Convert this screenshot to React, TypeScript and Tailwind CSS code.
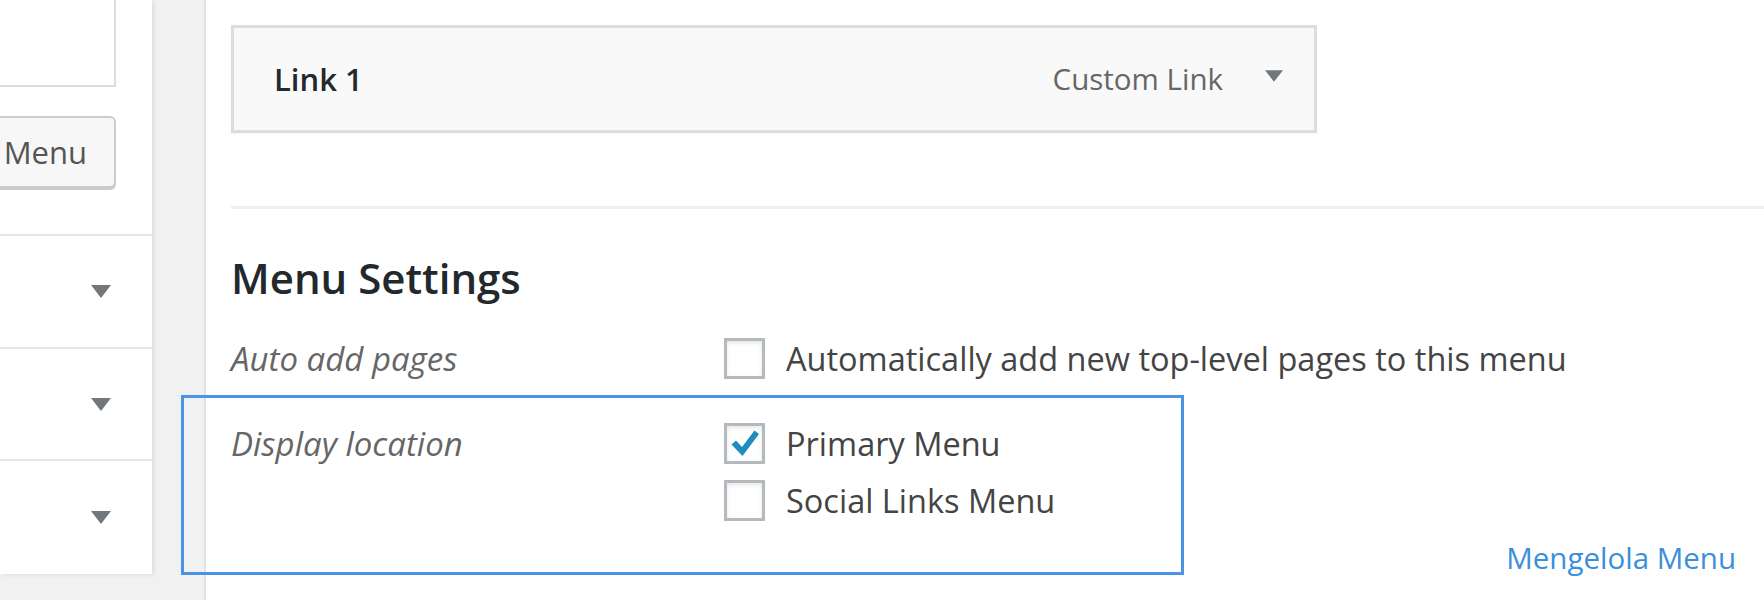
import React from 'react';

const font = { fontFamily: '"Open Sans", "Noto Sans", sans-serif' };

const Arrow = ({ className = '' }: { className?: string }) => (
  <svg viewBox="0 0 20 13" className={className} aria-hidden="true">
    <polygon points="0,0 20,0 10,13" fill="#72777c" />
  </svg>
);

const Checkbox = ({ checked = false }: { checked?: boolean }) => (
  <span className="flex h-[41px] w-[41px] shrink-0 items-center justify-center border-[3px] border-[#b4b9be] bg-white shadow-[inset_0_2px_4px_rgba(0,0,0,0.1)]">
    {checked && (
      <svg viewBox="0 0 35 35" className="h-[35px] w-[35px]" aria-hidden="true">
        <path d="M4.5 18.5 L9 14.5 L15 21 L27.5 4.5 L32 8 L15.5 30 Z" fill="#1e8cbe" />
      </svg>
    )}
  </span>
);

const SidePanel = () => (
  <div className="flex h-[574px] w-[152px] shrink-0 flex-col bg-white shadow-[2px_1px_4px_rgba(0,0,0,0.08)]">
    <div className="h-[87px] w-[116px] border-b-2 border-r-2 border-[#dddddd]" />
    <div className="mt-[29px] flex h-[73px] w-[116px] items-center justify-end rounded-r-[6px] border-2 border-l-0 border-[#cccccc] bg-[#f7f7f7] pr-[27px] text-[31px] text-[#555555] shadow-[0_2px_0_#cccccc]">
      Menu
    </div>
    <div className="mt-[46px] border-t-2 border-[#e5e5e5]" />
    {[0, 1, 2].map((i) => (
      <div key={i} className="flex h-[113px] items-center justify-end border-b-2 border-[#e5e5e5] pr-[41px] last:border-b-0">
        <Arrow className="h-[13px] w-[20px]" />
      </div>
    ))}
  </div>
);

export default function App() {
  return (
    <div className="flex h-[600px] w-[1764px] overflow-hidden bg-[#f1f1f1]" style={font}>
      <SidePanel />
      <div className="w-[52px] shrink-0" />
      <div className="relative flex-1 border-l-2 border-[#e2e2e2] bg-white pl-[25px] pt-[25px]">
        <div className="flex h-[108px] w-[1086px] items-center border-[3px] border-[#dddddd] bg-[#f9f9f9] pl-[40px] pr-[31px] shadow-[0_1px_1px_rgba(0,0,0,0.04)]">
          <span className="text-[31px] font-semibold text-[#23282d]">Link 1</span>
          <span className="ml-auto text-[29.5px] text-[#666666]">Custom Link</span>
          <Arrow className="mb-[6px] ml-[42px] h-[12px] w-[18px]" />
        </div>

        <div className="mt-[73px] border-t-[3px] border-[#eeeeee]" />

        <h3 className="mt-[48px] text-[42px] font-semibold leading-[42px] text-[#23282d]">Menu Settings</h3>

        <div className="mt-[39px] grid grid-cols-[493px_1fr] text-[32.5px] text-[#444444]">
          <div className="text-[33px] italic leading-[41px] text-[#666666]">Auto add pages</div>
          <label className="flex items-center gap-[21px] leading-[41px]">
            <Checkbox />
            <span>Automatically add new top-level pages to this menu</span>
          </label>

          <div className="mt-[44px] text-[33px] italic leading-[41px] text-[#666666]">Display location</div>
          <div className="mt-[44px] flex flex-col gap-[16px]">
            <label className="flex items-center gap-[21px] leading-[41px]">
              <Checkbox checked />
              <span>Primary Menu</span>
            </label>
            <label className="flex items-center gap-[21px] leading-[41px]">
              <Checkbox />
              <span>Social Links Menu</span>
            </label>
          </div>
        </div>

        <a className="absolute bottom-[20px] right-[28px] text-[29.5px] text-[#3c8fd9]">Mengelola Menu</a>
      </div>

      <div className="pointer-events-none absolute left-[181px] top-[395px] h-[180px] w-[1003px] border-[3px] border-[#4a94e6]" />
    </div>
  );
}
